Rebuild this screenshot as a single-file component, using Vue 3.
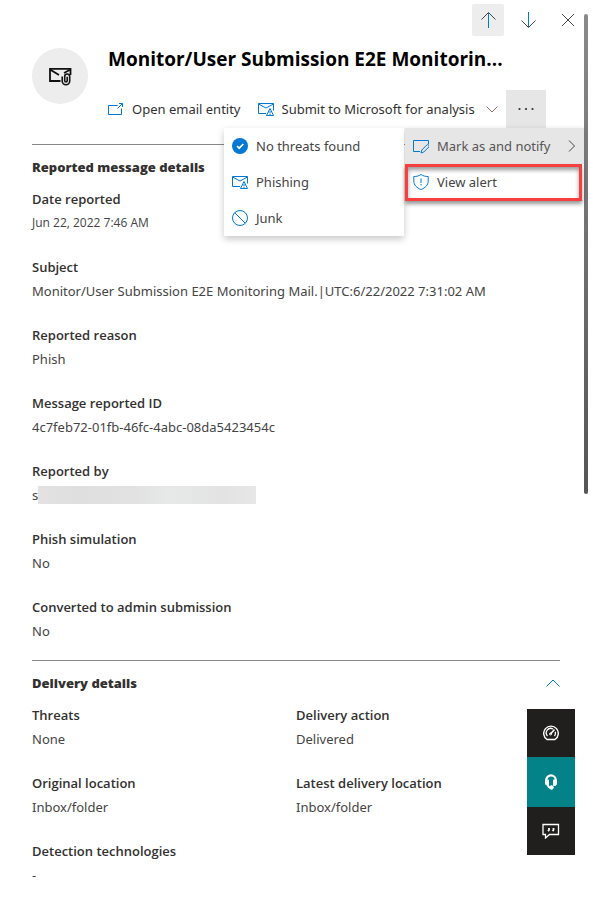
<script setup>
const reported = [
  ['Date reported', 'Jun 22, 2022 7:46 AM', 'small'],
  ['Subject', 'Monitor/User Submission E2E Monitoring Mail.|UTC:6/22/2022 7:31:02 AM'],
  ['Reported reason', 'Phish'],
  ['Message reported ID', '4c7feb72-01fb-46fc-4abc-08da5423454c'],
  ['Reported by', 's', 'redacted'],
  ['Phish simulation', 'No'],
  ['Converted to admin submission', 'No'],
]
const delivery = [
  ['Threats', 'None'],
  ['Delivery action', 'Delivered'],
  ['Original location', 'Inbox/folder'],
  ['Latest delivery location', 'Inbox/folder'],
  ['Detection technologies', '-'],
]
</script>

<template>
  <main class="panel">
    <nav class="topbar" aria-label="Panel navigation">
      <button class="nav-btn active" aria-label="Previous item">
        <svg width="16" height="16" viewBox="0 0 16 16" class="line blue"><path d="M8.5 16V1" /><path class="dark" d="M1.500 7.500l7-7 7 7" /></svg>
      </button>
      <button class="nav-btn" aria-label="Next item">
        <svg width="16" height="16" viewBox="0 0 16 16" class="line blue"><path d="M8.500 0v15" /><path class="dark" d="M1.500 8.500l7 7 7-7" /></svg>
      </button>
      <button class="nav-btn" aria-label="Close">
        <svg width="14" height="14" viewBox="0 0 14 14" class="line dark"><path d="M1 1l12 12M13 1 1 13" /></svg>
      </button>
    </nav>

    <header class="header">
      <div class="avatar">
        <svg width="24" height="20" viewBox="0 0 24 20" fill="none" stroke="#111" stroke-width="1.800">
          <path d="M12.500 15H2V2.800h20.500V9" /><path d="M2 3.500l9 5.500M22.500 3.500 16 7" />
          <path stroke-width="1.600" d="M14.200 10.500v4.500a3.700 3.700 0 0 0 7.500 0v-4.500a2.500 2.500 0 0 0-5 0v4.200a1.200 1.200 0 0 0 2.500 0v-4" />
        </svg>
      </div>
      <div class="heading">
        <h1>Monitor/User Submission E2E Monitorin...</h1>
        <div class="commands">
          <button class="command">
            <svg width="16" height="16" viewBox="0 0 16 16" class="line blue"><path d="M9.500 4.500h-9v9h13V7.500M9.500 7.500l5-5M11 2.500h3.500V6" /></svg>
            <span>Open email entity</span>
          </button>
          <button class="command submit">
            <svg width="16" height="16" viewBox="0 0 16 16" class="line blue"><path d="M8 12.500H.5v-10h15v7M.5 3l7.500 4 7.500-4M8.500 14.500h7l-3.500-7zM12 10v2.500M12 13v1" /></svg>
            <span>Submit to Microsoft for analysis</span>
            <svg width="12" height="12" viewBox="0 0 12 12" class="line soft end"><path d="M.5 3.500 6 9l5.500-5.500" /></svg>
          </button>
          <div class="more-wrap">
            <button class="more" aria-label="More actions" aria-expanded="true">
              <svg width="16" height="4" viewBox="0 0 16 4" fill="#333"><circle cx="1.500" cy="2" r="1.100" /><circle cx="8" cy="2" r="1.100" /><circle cx="14.500" cy="2" r="1.100" /></svg>
            </button>
            <div class="menus">
              <div class="menu submenu" role="menu">
                <button class="item" role="menuitem">
                  <svg width="16" height="16" viewBox="0 0 16 16"><circle cx="8" cy="8" r="8" fill="#0078d4" /><path d="M5 8l2.200 2.200L11.300 6" fill="none" stroke="#fff" stroke-width="1.700" /></svg>
                  <span>No threats found</span>
                </button>
                <button class="item" role="menuitem">
                  <svg width="16" height="16" viewBox="0 0 16 16" class="line blue"><path d="M8 12.500H.5v-10h15v7M.5 3l7.500 4 7.500-4M8.500 14.500h7l-3.500-7zM12 10v2.500M12 13v1" /></svg>
                  <span>Phishing</span>
                </button>
                <button class="item" role="menuitem">
                  <svg width="16" height="16" viewBox="0 0 16 16" class="line blue"><circle cx="8" cy="8" r="7.500" /><path d="M2.700 2.700l10.600 10.600" /></svg>
                  <span>Junk</span>
                </button>
              </div>
              <div class="menu main-menu" role="menu">
                <button class="item hover" role="menuitem">
                  <svg width="16" height="16" viewBox="0 0 16 16" class="line blue"><path d="M7 13.500H.5v-11h15V6M8 15l.8-3 5-5a1.400 1.400 0 0 1 2 2l-5 5z" /></svg>
                  <span>Mark as and notify</span>
                  <svg class="line dark end" width="8" height="12" viewBox="0 0 8 12"><path d="M1 .5 6.500 6 1 11.500" /></svg>
                </button>
                <button class="item marked" role="menuitem">
                  <svg width="16" height="16" viewBox="0 0 16 16" class="line blue"><path d="M8 .5C6 2 3.500 2.500.8 2.500V7c0 4 3 7 7.200 8.500C12.200 14 15.200 11 15.200 7V2.500C12.500 2.500 10 2 8 .5zM8 4.500V9M8 10v1.500" /></svg>
                  <span>View alert</span>
                </button>
              </div>
            </div>
          </div>
        </div>
      </div>
    </header>

    <section class="section">
      <h2>Reported message details</h2>
      <dl class="fields">
        <div v-for="[label, value, kind] in reported" :key="label">
          <dt>{{ label }}</dt>
          <dd :class="kind">{{ value }}<span v-if="kind === 'redacted'" class="mask"></span></dd>
        </div>
      </dl>
    </section>

    <section class="section">
      <div class="section-head">
        <h2>Delivery details</h2>
        <button class="collapse" aria-label="Collapse delivery details">
          <svg width="14" height="8" viewBox="0 0 14 8" class="line blue"><path d="M.5 7.500 7 1l6.500 6.500" /></svg>
        </button>
      </div>
      <dl class="fields two">
        <div v-for="[label, value] in delivery" :key="label">
          <dt>{{ label }}</dt>
          <dd>{{ value }}</dd>
        </div>
      </dl>
    </section>

    <div class="scroll-thumb"></div>
    <aside class="dock">
      <button aria-label="Performance">
        <svg width="16" height="16" viewBox="0 0 16 16" fill="none" stroke="#fff"><path stroke-width="1.400" d="M4 14.500a7.300 7.300 0 1 1 8 0z" /><path stroke-width="1.300" d="M4.500 11A4.500 4.500 0 0 1 10 4M12.300 6.800A4.500 4.500 0 0 1 11.500 11" /><path stroke-width="1.600" d="M7.500 9l4-4.500" /><circle cx="7.500" cy="9" r="1" /></svg>
      </button>
      <button class="help" aria-label="Help">
        <svg width="14" height="16" viewBox="0 0 14 16" fill="none" stroke="#fff"><path stroke-width="2.200" d="M2.300 8V6a4.700 4.700 0 0 1 9.400 0v4" /><path fill="#fff" d="M1.500 6H4.500v5.500H3L1.500 10zM9.500 6h3v4.500L11.500 11.500h-2z" /><path stroke-width="1.800" d="M4 11.500c.3 1.500 1.500 2.200 3 2.200" /><circle cx="7.500" cy="13.500" r="1.800" fill="#fff" /></svg>
      </button>
      <button aria-label="Feedback">
        <svg width="18" height="16" viewBox="0 0 18 16" fill="none" stroke="#fff"><path stroke-width="1.300" d="M1 1.500h15.500v10H7.500L3.500 15v-3.500H1z" /><path stroke-width="1.800" d="M7 5v2l-1 1M11.500 5v2l-1 1" /></svg>
      </button>
    </aside>
  </main>
</template>

<style>
body { margin: 0; background: #fff; }
</style>

<style scoped>
* { box-sizing: border-box; }
.panel {
  position: relative;
  min-height: 100vh;
  padding-bottom: 8px;
  font: 13px/24px "Noto Sans", "Open Sans", sans-serif;
  color: #323130;
}
button { border: 0; padding: 0; background: none; color: inherit; font: inherit; cursor: pointer; }
svg { display: block; flex: none; }
.line { fill: none; stroke-width: 1; }
.blue { stroke: #0078d4; }
.dark { stroke: #444; }
.soft { stroke: #a4645c; }
.topbar { display: flex; justify-content: flex-end; gap: 8px; padding: 4px 7px 0 0; }
.nav-btn { display: grid; place-items: center; width: 32px; height: 32px; border-radius: 2px; }
.nav-btn.active { background: #ededed; }
.header { display: flex; gap: 20px; margin: 0 31px 0 32px; height: 109px; padding-top: 12px; border-bottom: 1px solid #8a8886; }
.avatar { display: grid; place-items: center; flex: none; width: 56px; height: 56px; border-radius: 50%; background: #ededed; }
h1 { margin: 0; height: 42px; font-family: "Open Sans", sans-serif; font-size: 19px; line-height: 22px; font-weight: 700; color: #000; white-space: nowrap; }
.heading { flex: 1; min-width: 0; padding-right: 14px; }
.commands { display: flex; gap: 17px; height: 38px; }
.command { display: flex; align-items: center; gap: 8px; white-space: nowrap; }
.command.submit { flex: 1; }
.more-wrap { position: relative; z-index: 2; margin-left: -9px; }
.more { display: grid; place-items: center; width: 40px; height: 38px; background: #e6e6e6; }
.menus { position: absolute; top: 38px; right: -38px; display: flex; align-items: flex-start; gap: 1px; }
.menu { background: #fff; box-shadow: 0 3px 7px rgba(0, 0, 0, .22); }
.submenu { width: 180px; }
.main-menu { width: 179px; box-shadow: 0 0 4px rgba(0, 0, 0, .1); }
.item { display: flex; align-items: center; gap: 8px; width: 100%; height: 36px; padding: 0 8px; text-align: left; white-space: nowrap; color: #444; }
.item.hover { background: #e6e6e6; color: #555; }
.end { margin-left: auto; }
.item.marked { position: relative; }
.item.marked::after { content: ""; position: absolute; inset: 0 2px -1px 0; border: 3px solid #f83f3f; box-shadow: 0 3px 4px rgba(0, 0, 0, .4), inset 0 3px 4px rgba(0, 0, 0, .4); }
h2 { margin: 0; font-family: "Open Sans", sans-serif; font-size: 13px; line-height: 24px; font-weight: 800; }
.section { margin: 0 31px 0 32px; padding: 10px 0 17px; }
.section + .section { border-top: 1px solid #8a8886; }
.section-head { display: flex; justify-content: space-between; }
.collapse { display: grid; place-items: center; width: 14px; }
.fields { display: grid; row-gap: 20px; margin: 8px 0 0; }
.two { grid-template-columns: 1fr 1fr; }
dt { font-family: "Open Sans", sans-serif; font-weight: 600; }
dd { margin: 0; color: #444; white-space: nowrap; height: 24px; }
dd.small { font-family: "Open Sans", sans-serif; font-size: 12px; }
dd.redacted { display: flex; align-items: center; }
.mask { width: 218px; height: 18px; background: linear-gradient(90deg, #e3e1e1, #dfdfdf 20%, #e2e2e2 45%, #e7e8e8 60%, #e3e3e3 85%, #e7e7e7); }
.scroll-thumb { position: absolute; top: 14px; right: 3px; width: 4px; height: 480px; border-radius: 2px; background: linear-gradient(#8a8a8a, #555); }
.dock { position: fixed; right: 16px; bottom: 49px; width: 48px; }
.dock button { display: grid; place-items: center; width: 48px; height: 48px; background: #201f1e; }
.dock .help { height: 50px; background: #038387; }
</style>
